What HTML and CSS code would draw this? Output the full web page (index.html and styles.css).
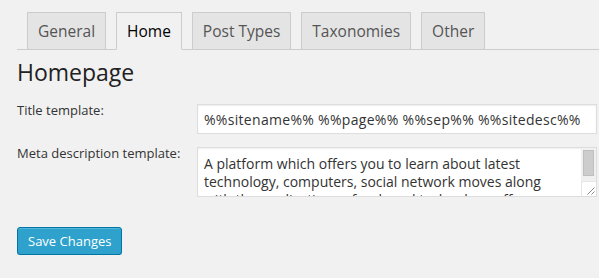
FILE: index.html
```html
<!DOCTYPE html>
<html>
<head>
<meta charset="utf-8">
<link rel="stylesheet" href="styles.css">
</head>
<body>
<div class="wrap">
  <nav class="tabs">
    <a class="tab">General</a>
    <a class="tab active">Home</a>
    <a class="tab">Post Types</a>
    <a class="tab">Taxonomies</a>
    <a class="tab">Other</a>
  </nav>
  <div class="content">
    <h2 class="title">Homepage</h2>
    <div class="row">
      <label class="label">Title template:</label>
      <input class="field input" type="text" value="%%sitename%% %%page%% %%sep%% %%sitedesc%%">
    </div>
    <div class="row row2">
      <label class="label">Meta description template:</label>
      <div class="area-wrap">
        <textarea class="field area">A platform which offers you to learn about latest technology, computers, social network moves along with the applications of web and technology offers.</textarea>
        <div class="sb">
          <div class="track"><div class="thumb"></div></div>
          <div class="grip">
            <svg width="14" height="14" viewBox="0 0 14 14"><path d="M12.5 5.5 L5.5 12.5 M12.5 9.5 L9.5 12.5" stroke="#8a8a8a" stroke-width="1" fill="none"/></svg>
          </div>
        </div>
      </div>
    </div>
    <button class="btn">Save Changes</button>
  </div>
</div>
</body>
</html>
```
FILE: styles.css
```css
html, body {
  margin: 0;
  padding: 0;
  background: #f1f1f1;
  font-family: "Open Sans", "Liberation Sans", sans-serif;
  color: #444;
  overflow: hidden;
}
.wrap {
  width: 599px;
}
.tabs {
  display: flex;
  margin-left: 17px;
  padding: 12px 0 0 10px;
  border-bottom: 1px solid #ccc;
}
.tab {
  display: block;
  border: 1px solid #ccc;
  background: #e4e4e4;
  color: #555;
  font-size: 15.5px;
  line-height: 24px;
  padding: 6px 10px 6px;
  margin: 0 10px -1px 0;
}
.tab.active {
  background: #f1f1f1;
  color: #000;
  border-bottom-color: #f1f1f1;
}
.content {
  padding-left: 17px;
}
.title {
  margin: 8px 0 13px;
  font-size: 23px;
  line-height: 29px;
  font-weight: 400;
  color: #222;
}
.row {
  display: flex;
  align-items: flex-start;
}
.row2 {
  margin-top: 9px;
}
.label {
  width: 180px;
  font-size: 13px;
  line-height: 20px;
  color: #333;
}
.field {
  box-sizing: border-box;
  width: 400px;
  margin: 0;
  border: 1px solid #ddd;
  background: #fff;
  font-family: "Open Sans", "Liberation Sans", sans-serif;
  font-size: 14px;
  color: #333;
  outline: none;
  box-shadow: inset 0 1px 2px rgba(0,0,0,0.07);
}
.input {
  margin-top: 4px;
  height: 30px;
  padding: 0 6px;
  line-height: 28px;
  letter-spacing: 0.3px;
}
.area-wrap {
  position: relative;
  width: 400px;
  height: 50px;
  margin-top: 4px;
}
.area {
  display: block;
  height: 50px;
  padding: 7px 30px 0 6px;
  line-height: 18px;
  resize: none;
  overflow: hidden;
}
.sb {
  position: absolute;
  top: 1px;
  right: 1px;
  bottom: 1px;
  width: 15px;
  display: flex;
  flex-direction: column;
}
.track {
  flex: 1;
  background: #f0f0f0;
  padding: 2px 2px 0;
}
.thumb {
  height: 26px;
  box-sizing: border-box;
  background: #cdcdcd;
  border: 1px solid #bfbfbf;
}
.grip {
  height: 15px;
  box-sizing: border-box;
  background: #fff;
  border-top: 1px solid #e6e6e6;
  border-left: 1px solid #e6e6e6;
  display: flex;
  justify-content: flex-end;
  align-items: flex-end;
}
.grip svg {
  display: block;
}
.btn {
  display: block;
  margin-top: 30px;
  height: 28px;
  padding: 0 10px;
  border: 1px solid #0074a2;
  border-radius: 3px;
  background: #2ea2cc;
  color: #fff;
  font-family: "Open Sans", "Liberation Sans", sans-serif;
  font-size: 13px;
  line-height: 26px;
  box-shadow: inset 0 1px 0 rgba(120,200,230,0.5), 0 1px 0 rgba(0,0,0,0.15);
}
```
